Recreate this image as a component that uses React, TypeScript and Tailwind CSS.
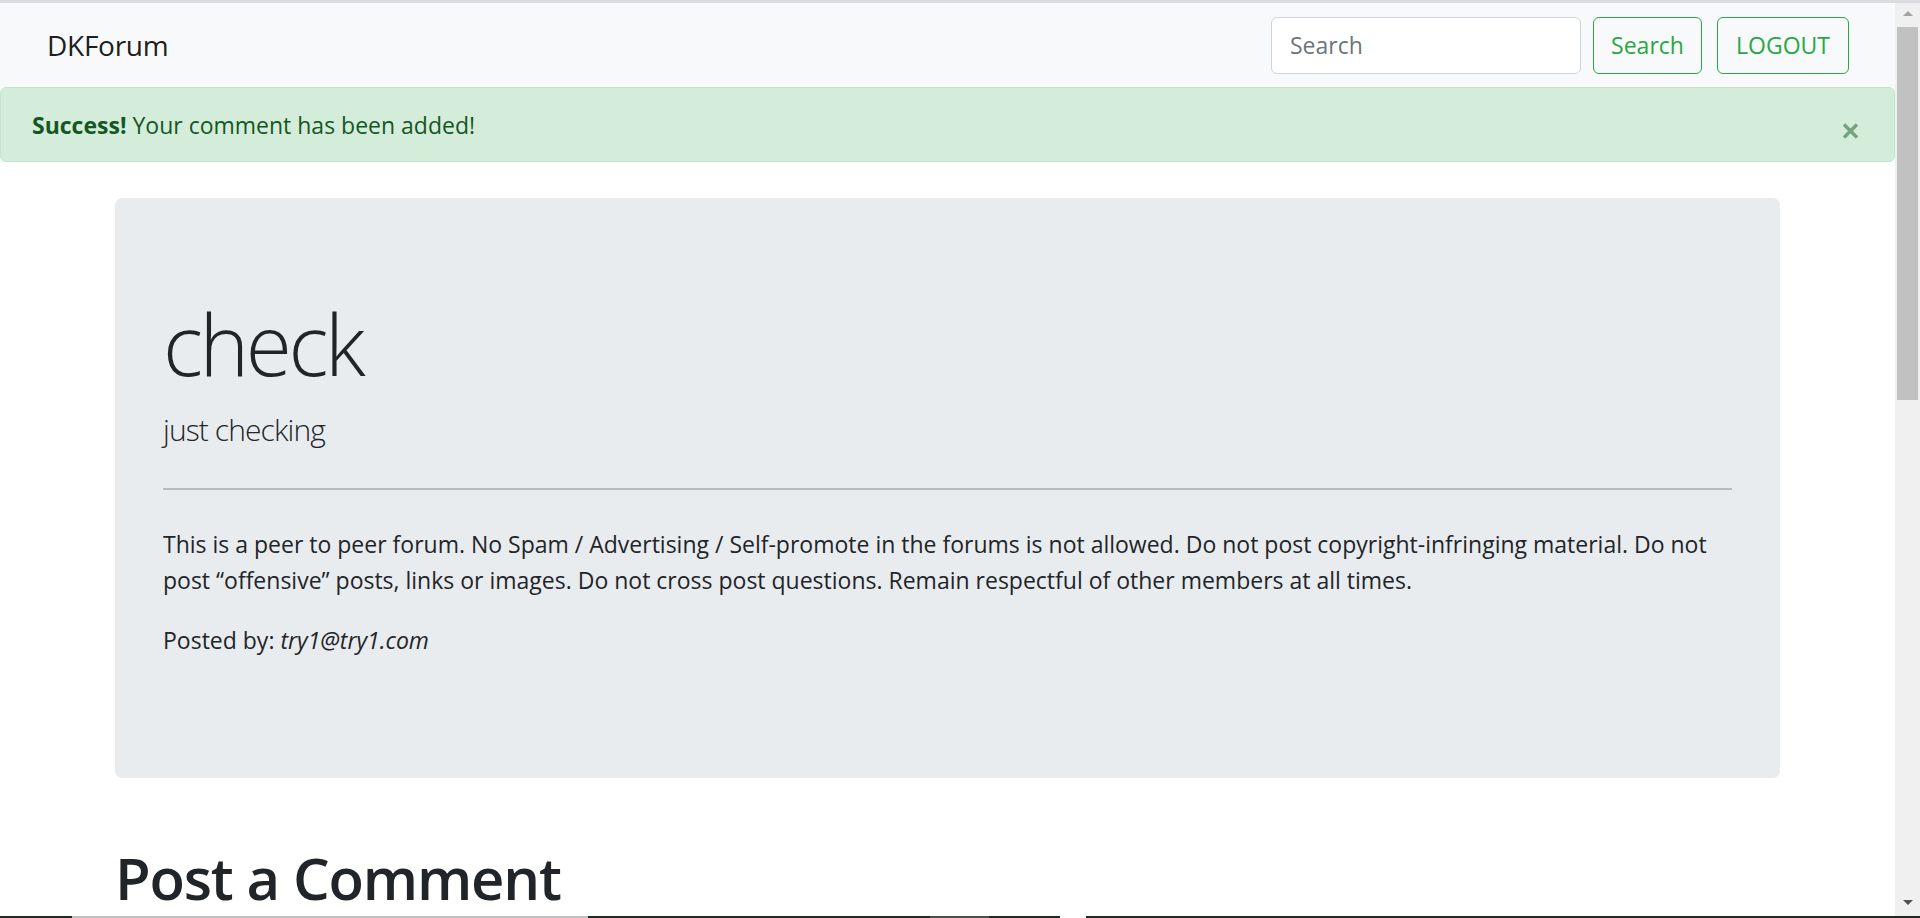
import React from "react";

const rules =
  "This is a peer to peer forum. No Spam / Advertising / Self-promote in the forums is not allowed. Do not post copyright-infringing material. Do not post \u201coffensive\u201d posts, links or images. Do not cross post questions. Remain respectful of other members at all times.";

const Navbar: React.FC = () => (
  <nav className="h-[84px] shrink-0 bg-[#f8f9fa] flex items-center justify-between pl-[47px] pr-[46px]">
    <a href="#" className="text-[28px] leading-[45px] tracking-[-0.01em] text-black/90">
      DKForum
    </a>
    <form className="flex items-center" onSubmit={(e) => e.preventDefault()}>
      <input
        type="search"
        placeholder="Search"
        className="w-[310px] h-[57px] bg-white border border-[#ced4da] rounded-[6px] px-[18px] text-[23px] text-[#495057] placeholder:text-[#6c757d] outline-none"
      />
      <button className="ml-[12px] w-[109px] h-[57px] border border-[#28a745] rounded-[6px] text-[23px] text-[#28a745]">
        Search
      </button>
      <button className="ml-[15px] w-[132px] h-[57px] border border-[#28a745] rounded-[6px] text-[23px] text-[#28a745]">
        LOGOUT
      </button>
    </form>
  </nav>
);

const Alert: React.FC = () => (
  <div className="relative h-[75px] shrink-0 bg-[#d4edda] border border-[#c3e6cb] rounded-[6px] flex items-center pl-[31px] text-[23px] leading-[36px] text-[#155724]">
    <p className="mt-[1px]">
      <strong className="font-bold">Success!</strong> Your comment has been added!
    </p>
    <button className="absolute right-[35px] top-[35px]" aria-label="Close">
      <svg width="17" height="16" viewBox="0 0 17 16">
        <path d="M2 1.5 L15 14.5 M15 1.5 L2 14.5" stroke="#74a27f" strokeWidth="3.4" />
      </svg>
    </button>
  </div>
);

const Scrollbar: React.FC = () => (
  <div className="w-[25px] shrink-0 bg-[#f0f0f0] flex flex-col items-center">
    <svg width="14" height="24" viewBox="0 0 14 24">
      <path d="M2 13 L7 8 L12 13 Z" fill="#a3a3a3" />
    </svg>
    <div className="w-[21px] h-[373px] bg-[#c1c1c1]" />
    <div className="flex-1" />
    <svg width="14" height="20" viewBox="0 0 14 20">
      <path d="M2 4 L12 4 L7 9 Z" fill="#505050" />
    </svg>
  </div>
);

const TaskbarEdge: React.FC = () => (
  <div className="h-[2px] shrink-0 flex">
    <div className="w-[72px] bg-[#202924]" />
    <div className="w-[516px] bg-[#c0c0c0]" />
    <div className="w-[342px] bg-[#202924]" />
    <div className="w-[59px] bg-[#4b504d]" />
    <div className="w-[71px] bg-[#202924]" />
    <div className="w-[26px] bg-white" />
    <div className="flex-1 bg-[#202924]" />
  </div>
);

export default function App() {
  return (
    <div className="w-[1920px] h-[918px] overflow-hidden bg-white flex flex-col font-['Open_Sans','Noto_Sans',sans-serif] text-[#212529]">
      <div className="h-[3px] shrink-0 bg-[#dadce0]" />
      <div className="flex flex-1 min-h-0">
        <main className="flex-1 min-w-0 overflow-hidden flex flex-col">
          <Navbar />
          <Alert />
          <div className="w-[1710px] mx-auto px-[22.5px] mt-[36px]">
            <div className="bg-[#e9ecef] rounded-[7px] px-[48px] pt-[96px] pb-[96px]">
              <h1 className="text-[84px] font-light leading-[100.8px] tracking-[-0.04em] mb-[12px]">
                check
              </h1>
              <p className="text-[30px] font-light leading-[45px] tracking-[-0.03em]">just checking</p>
              <hr className="my-[36px] border-0 border-t-2 border-[#b8bbbe]" />
              <p className="text-[23px] leading-[36px] mb-[24px]">{rules}</p>
              <p className="text-[23px] leading-[36px] mb-[24px]">
                Posted by: <em>try1@try1.com</em>
              </p>
            </div>
            <h1 className="mt-[64px] text-[58px] font-semibold leading-[72px] tracking-[-0.02em]">
              Post a Comment
            </h1>
          </div>
        </main>
        <Scrollbar />
      </div>
      <TaskbarEdge />
    </div>
  );
}
